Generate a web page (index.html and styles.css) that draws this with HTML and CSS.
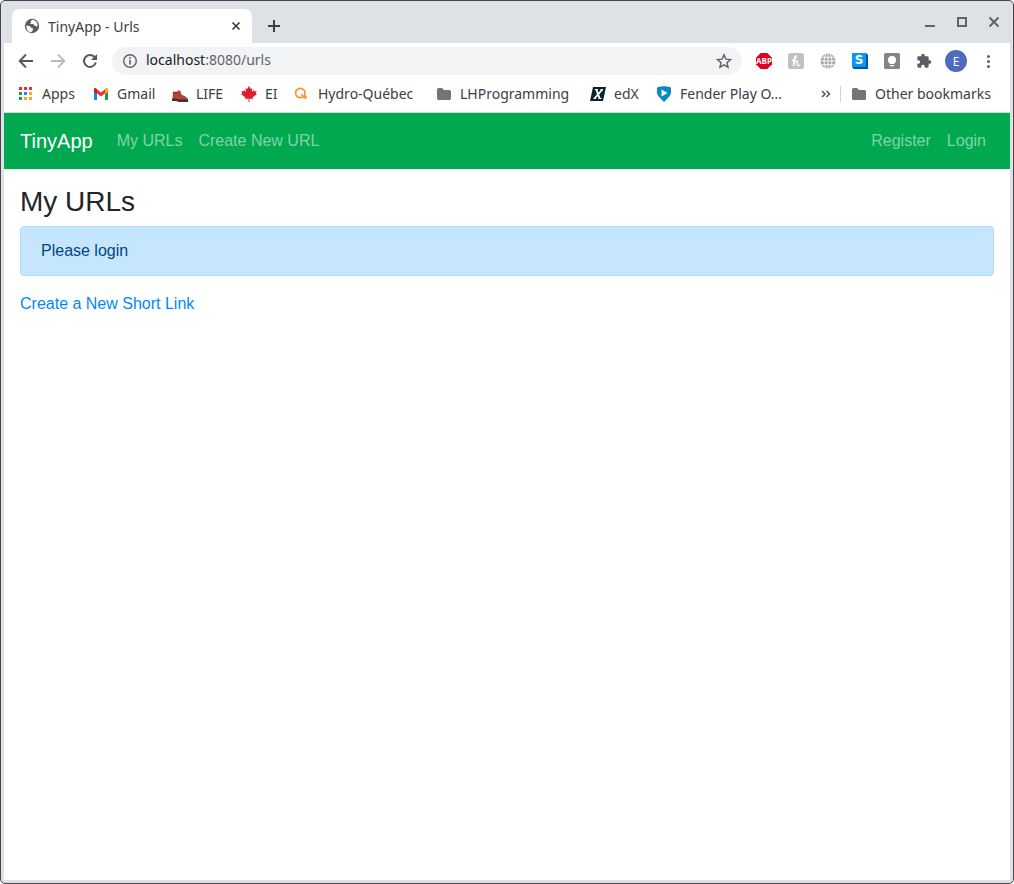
FILE: index.html
```html
<!DOCTYPE html>
<html lang="en">
<head>
<meta charset="utf-8">
<title>TinyApp - Urls</title>
<link rel="stylesheet" href="styles.css">
</head>
<body>
<div class="window">
  <header class="tabstrip">
    <div class="tab">
      <svg class="icon" viewBox="0 0 16 16"><circle cx="8" cy="8" r="7.200" fill="#5a5e63"/><path d="M2.500 7.500 6 8.200l1 1.600 2 .4-.3 2.200-1.500 1.900C4.200 14 2 11.500 2.500 7.500zM8.500 1.800c-1 .8-2 1-1.600 2 .8.700-.6 1.200-.9 2.200 1.500.2 3-.3 4 .8.500 1.400 2 1.600 3.600 1.500.2-3-1.500-5.800-5.100-6.500z" fill="#fff"/></svg>
      <span class="tab-title">TinyApp - Urls</span>
      <button class="plain tab-close" aria-label="Close tab"><svg width="10" height="10" viewBox="0 0 10 10"><path d="m1.500 1.500 7 7m0-7-7 7" stroke="#3c4043" stroke-width="1.700"/></svg></button>
    </div>
    <button class="plain new-tab" aria-label="New tab"><svg width="12" height="12" viewBox="0 0 12 12"><path d="M6 0v12M0 6h12" stroke="#3c4043" stroke-width="2"/></svg></button>
    <div class="window-buttons">
      <button class="plain" aria-label="Minimize"><svg width="12" height="12" viewBox="0 0 12 12"><path d="M1 10h10" stroke="#606367" stroke-width="2"/></svg></button>
      <button class="plain" aria-label="Maximize"><svg width="12" height="12" viewBox="0 0 12 12"><path d="M2 2h8v8H2z" fill="none" stroke="#606367" stroke-width="2"/></svg></button>
      <button class="plain" aria-label="Close"><svg width="12" height="12" viewBox="0 0 12 12"><path d="m1.500 1.500 9 9m0-9-9 9" stroke="#606367" stroke-width="2"/></svg></button>
    </div>
  </header>

  <div class="toolbar">
    <div class="nav-buttons">
      <button class="plain" aria-label="Back"><svg class="icon" viewBox="0 0 16 16"><path d="M15 8H2.500M8 1.500 1.700 8 8 14.500" fill="none" stroke="#55585c" stroke-width="1.900"/></svg></button>
      <button class="plain" aria-label="Forward"><svg class="icon" viewBox="0 0 16 16"><path d="M1 8h12.500M8 1.500 14.300 8 8 14.500" fill="none" stroke="#b9bbbe" stroke-width="1.900"/></svg></button>
      <button class="plain" aria-label="Reload"><svg class="icon" viewBox="0 0 16 16"><path d="M13.800 9.500A6 6 0 1 1 12.500 4" fill="none" stroke="#55585c" stroke-width="2"/><path d="M15 1v6H9z" fill="#55585c"/></svg></button>
    </div>
    <div class="omnibox">
      <svg class="icon" viewBox="0 0 16 16"><circle cx="8" cy="8" r="6.300" fill="none" stroke="#5f6368" stroke-width="1.400"/><path d="M8 7v4.500M8 4.300v1.600" stroke="#5f6368" stroke-width="1.700"/></svg>
      <div class="address" role="textbox" aria-label="Address" tabindex="0"><span class="host">localhost</span>:8080/urls</div>
      <button class="plain" aria-label="Bookmark this page"><svg class="icon" viewBox="0 0 16 16"><path d="m8 1.800 1.900 4.300 4.700.4-3.600 3.100 1.100 4.600L8 11.800l-4.100 2.400L5 9.600 1.400 6.500l4.700-.4z" fill="none" stroke="#5f6368" stroke-width="1.400"/></svg></button>
    </div>
    <div class="extensions">
      <button class="plain" aria-label="Adblock Plus"><svg class="icon" viewBox="0 0 16 16"><path d="M4.700 0h6.600L16 4.700v6.600L11.300 16H4.700L0 11.300V4.700z" fill="#e2001a"/><text x="8" y="10.900" text-anchor="middle" class="abp">ABP</text></svg></button>
      <button class="plain" aria-label="Honey"><svg class="icon" viewBox="0 0 16 16"><rect width="16" height="16" rx="2" fill="#c1c1c1"/><path d="M4 7.500C6.500 7 8.700 4.800 8.200 3.400 7.700 2.300 6.500 3.500 6.200 6L5.300 12.800C6 10 7.500 7.800 8.900 8c1.300.3.100 2.600.3 3.900.2 1.200 1.800.9 2.900-.3" fill="none" stroke="#fff" stroke-width="1.300"/></svg></button>
      <button class="plain" aria-label="Globe"><svg class="icon" viewBox="0 0 16 16"><circle cx="8" cy="8" r="7.500" fill="#a6a6a6"/><path d="M8 .5v15M.5 8h15M2 4.300h12M2 11.700h12M5.800 1C3.600 5 3.600 11 5.800 15M10.200 1c2.200 4 2.200 10 0 14" fill="none" stroke="#fff" stroke-width=".9"/></svg></button>
      <button class="plain" aria-label="Stylus"><svg class="icon" viewBox="0 0 16 16"><path d="M0 0h14l2 2v14H2l-2-2z" fill="#005b94"/><path d="M0 0h14v14H0z" fill="#0a98f7"/><text x="7" y="11" text-anchor="middle" class="letter-s">S</text></svg></button>
      <button class="plain" aria-label="Keep"><svg class="icon" viewBox="0 0 16 16"><rect width="16" height="16" rx="1.500" fill="#80868b"/><circle cx="8" cy="7" r="4" fill="#fff"/><path d="M6 9h4v2H6zM6 12h4v1.300H6z" fill="#fff"/></svg></button>
      <button class="plain" aria-label="Extensions"><svg class="icon" viewBox="0 0 24 24"><path d="M20.500 11H19V7a2 2 0 0 0-2-2h-4V3.500a2.500 2.500 0 0 0-5 0V5H4a2 2 0 0 0-2 2v3.800h1.500a2.700 2.700 0 0 1 0 5.400H2V20a2 2 0 0 0 2 2h3.800v-1.500a2.700 2.700 0 0 1 5.400 0V22H17a2 2 0 0 0 2-2v-4h1.500a2.500 2.500 0 0 0 0-5z" fill="#5a5e63"/></svg></button>
      <button class="plain avatar" aria-label="Profile">E</button>
      <button class="plain" aria-label="Menu"><svg class="icon" viewBox="0 0 16 16"><g fill="#5f6368"><circle cx="8.500" cy="3.500" r="1.500"/><circle cx="8.500" cy="8.500" r="1.500"/><circle cx="8.500" cy="13.500" r="1.500"/></g></svg></button>
    </div>
  </div>

  <nav class="bookmarks" aria-label="Bookmarks">
    <a class="bookmark apps" href="#"><svg class="icon" viewBox="0 0 16 16"><path d="M1 1h3v3H1zM6 1h3v3H6zM11 1h3v3h-3z" fill="#f4263a"/><path d="M1 6h3v3H1zM1 11h3v3H1z" fill="#119d57"/><path d="M6 6h3v3H6z" fill="#1a8cff"/><path d="M11 6h3v3h-3zM6 11h3v3H6zM11 11h3v3h-3z" fill="#f9a825"/></svg>Apps</a>
    <a class="bookmark gmail" href="#"><svg class="icon" viewBox="0 0 16 16"><path d="M1 4h3v10H2a1 1 0 0 1-1-1z" fill="#1684f8"/><path d="M12 4h3v9a1 1 0 0 1-1 1h-2z" fill="#159f50"/><path d="M1 3.500 2.500 2 8 6.500 13.500 2 15 3.500V5l-7 5.500L1 5z" fill="#ee3038"/><path d="m12 3.200 1.500-1.200A1.500 1.500 0 0 1 15 4v2l-3 2z" fill="#fbad00"/><path d="M1 4v2l3 2V3.200L2.500 2A1.500 1.500 0 0 0 1 4z" fill="#c5221f"/></svg>Gmail</a>
    <a class="bookmark life" href="#"><svg class="icon" viewBox="0 0 16 16"><path d="M1 5.500 4 6l3.500-2 1.300 4.200L13 10.200l2.500 2V14H.5z" fill="#b94432"/><path d="M0 12.500h4l2 .8h10V16H6l-1-1H0z" fill="#403235"/><path d="m7 7 2-1M7.500 9l2-1M1 7h4" stroke="#69281f" stroke-width="1"/></svg>LIFE</a>
    <a class="bookmark ei" href="#"><svg class="icon" viewBox="0 0 16 16"><path d="m8 0 1.800 3 1.600-.7-.5 3.800 2-2 .6 1.300 2-.3-.7 2.200 1.200.7-4.600 3.800.5 1.400-3.400-.6V16h-1v-3.400l-3.400.6.5-1.400L0 8l1.200-.7L.5 5.100l2 .3.600-1.300 2 2-.5-3.800 1.600.7z" fill="#d91f34"/></svg>EI</a>
    <a class="bookmark hydro" href="#"><svg class="icon" viewBox="0 0 16 16"><circle cx="6.300" cy="7" r="4.700" fill="none" stroke="#f7942d" stroke-width="1.700"/><path d="m7 8 2.500 2.500M11 9v4M9 11h4" stroke="#f7942d" stroke-width="1.400"/></svg>Hydro-Québec</a>
    <a class="bookmark lh" href="#"><svg class="icon" viewBox="0 0 16 16"><path d="M1 3.500Q1 2 2.500 2H6l2 2h5.500Q15 4 15 5.500v7q0 1.500-1.500 1.500h-11Q1 14 1 12.500z" fill="#70757a"/></svg>LHProgramming</a>
    <a class="bookmark edx" href="#"><svg class="icon" viewBox="0 0 16 16"><path d="M3 1h13l-3 14H0z" fill="#06262c"/><path d="m6.300 3.500 3.400 9M12.300 3.500 4.500 12.500" fill="none" stroke="#fff" stroke-width="1.900"/><path d="M4.800 3.500H8M10.500 3.500H13M3.500 12.500H6M8.500 12.500h3" stroke="#fff"/></svg>edX</a>
    <a class="bookmark fender" href="#"><svg class="icon" viewBox="0 0 16 16"><path d="M1 1.500Q8-1.200 15 1.500v5c0 3-2.500 4.500-4.500 7L8 16l-2.500-2.500C3.500 11 1 9.500 1 6.500z" fill="#0789c4"/><path d="m5.500 3.500 6 3.500-6 3.500z" fill="#fff"/></svg>Fender Play O…</a>
    <button class="plain overflow" aria-label="More bookmarks"><svg class="icon" viewBox="0 0 16 16"><path d="m4 5 3 3-3 3M8.500 5l3 3-3 3" fill="none" stroke="#55585c" stroke-width="1.500"/></svg></button>
    <a class="bookmark other" href="#"><svg class="icon" viewBox="0 0 16 16"><path d="M1 3.500Q1 2 2.500 2H6l2 2h5.500Q15 4 15 5.500v7q0 1.500-1.500 1.500h-11Q1 14 1 12.500z" fill="#70757a"/></svg>Other bookmarks</a>
  </nav>

  <div class="page">
    <nav class="navbar">
      <a class="brand" href="#">TinyApp</a>
      <a class="nav-link" href="#">My URLs</a>
      <a class="nav-link" href="#">Create New URL</a>
      <span class="spacer"></span>
      <a class="nav-link" href="#">Register</a>
      <a class="nav-link" href="#">Login</a>
    </nav>
    <main class="content">
      <h1>My URLs</h1>
      <div class="alert" role="alert">Please login</div>
      <a class="create" href="#">Create a New Short Link</a>
    </main>
  </div>
</div>
</body>
</html>
```
FILE: styles.css
```css
* { box-sizing: border-box; }
body { margin: 0; background: #fff; font-family: "Noto Sans", "Open Sans", sans-serif; }
a { text-decoration: none; }
.window {
  min-height: 100vh;
  display: flex;
  flex-direction: column;
  border: 1px solid #464548;
  border-radius: 5px;
  background: #dee1e6;
  padding: 0 3px 3px;
  overflow: hidden;
}
.plain {
  border: 0;
  padding: 0;
  background: none;
  display: flex;
  align-items: center;
  justify-content: center;
  font: inherit;
}
.icon { width: 16px; height: 16px; flex: none; display: block; }

.tabstrip { display: flex; height: 42px; padding: 8px 10px 0 8px; }
.tab {
  width: 240px;
  display: flex;
  align-items: center;
  gap: 8px;
  padding: 0 11px 0 12px;
  background: #fff;
  border-radius: 8px 8px 0 0;
}
.tab-title { flex: 1; font-size: 14px; color: #3c4043; white-space: nowrap; }
.new-tab { width: 44px; }
.window-buttons { margin-left: auto; display: flex; gap: 20px; height: 26px; align-items: center; }

.toolbar { display: flex; align-items: center; height: 36px; padding: 0 14px; background: #fff; }
.nav-buttons { display: flex; gap: 16px; margin-right: 14px; }
.omnibox {
  flex: 1;
  height: 28px;
  border-radius: 14px;
  background: #f1f3f4;
  display: flex;
  align-items: center;
  gap: 8px;
  padding: 0 10px;
}
.address { flex: 1; font-size: 14px; line-height: 20px; padding-bottom: 2px; color: #5f6368; white-space: nowrap; }
.host { color: #202124; }
.extensions { display: flex; align-items: center; gap: 16px; margin-left: 14px; }
.abp { font: bold 8px "Open Sans", sans-serif; fill: #fff; }
.letter-s { font: bold 12px "DejaVu Sans", sans-serif; fill: #fff; }
.extensions .avatar {
  width: 22px;
  height: 22px;
  margin: 0 -3px;
  border-radius: 50%;
  background: #4f6bbd;
  color: #fff;
  font-size: 12px;
}

.bookmarks {
  display: flex;
  align-items: center;
  height: 34px;
  padding: 0 14px 3px;
  border-bottom: 1px solid #d5d8dc;
  background: #fff;
}
.bookmark {
  display: flex;
  align-items: center;
  gap: 8px;
  font-size: 14px;
  line-height: 20px;
  color: #3c4043;
  white-space: nowrap;
}
.apps { width: 75px; }
.gmail { width: 79px; }
.life { width: 69px; }
.ei { width: 53px; }
.hydro { width: 142px; }
.lh { width: 154px; }
.edx { width: 66px; }
.overflow { margin-left: auto; margin-right: 6px; }
.other { width: 156px; padding-left: 10px; border-left: 1px solid #cfd1d4; line-height: 16px; }

.page { flex: 1; background: #fff; font: 16px/24px "Liberation Sans", Arial, sans-serif; }
.navbar { display: flex; align-items: center; height: 56px; padding: 0 16px; background: #00a84f; }
.brand { margin-right: 16px; font-size: 20px; line-height: 30px; color: #fff; }
.nav-link { padding: 8px; color: rgba(255, 255, 255, 0.5); }
.spacer { flex: 1; }
.content { padding: 16px; }
h1 { margin: 0 0 8px; font-size: 28px; line-height: 33px; font-weight: 400; color: #212529; }
.alert {
  padding: 12px 20px;
  margin-bottom: 16px;
  border: 1px solid #b0dcfd;
  border-radius: 4px;
  background: #c6e6fd;
  color: #00467f;
}
.create { color: #0088ff; }
```
